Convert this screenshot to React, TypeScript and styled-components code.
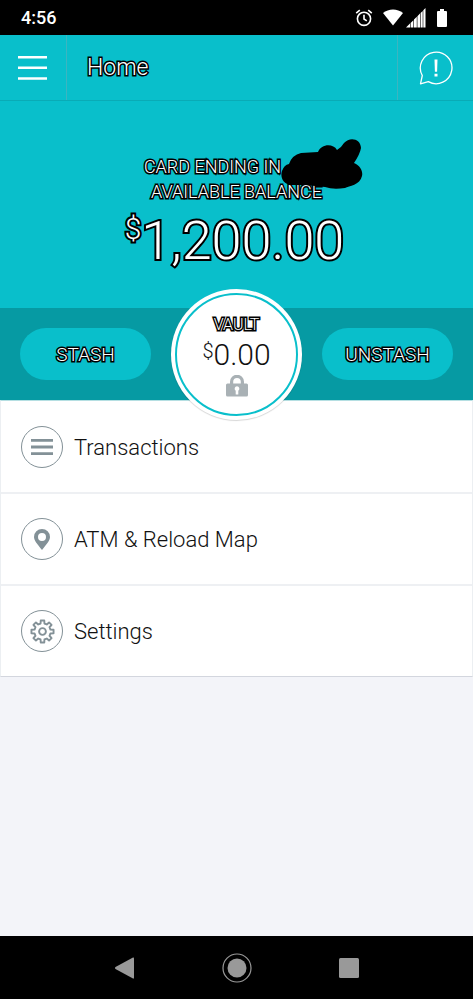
import React from "react";
import styled, { createGlobalStyle, css } from "styled-components";

const teal = "#09bfcb";
const slate = "#839197";

const GlobalStyle = createGlobalStyle`
  *, *::before, *::after { box-sizing: border-box; }
  body { margin: 0; font-family: Roboto, "Liberation Sans", sans-serif; }
  button { font: inherit; color: inherit; border: 0; padding: 0; background: none; cursor: pointer; }
  svg { display: block; }
`;

const outlined = css`
  color: #fff;
  -webkit-text-stroke: 3px #000;
  paint-order: stroke fill;
`;

const Screen = styled.div`
  min-height: 100vh;
  display: flex;
  flex-direction: column;
  background: #f3f4f9;
`;

const StatusBar = styled.div`
  height: 35px;
  display: flex;
  align-items: center;
  justify-content: space-between;
  padding: 0 26px 0 21px;
  background: #000;
  color: #fff;
`;

const Clock = styled.time`
  font-size: 18px;
  font-weight: 500;
`;

const StatusIcons = styled.div`
  display: flex;
  align-items: center;
`;

const Header = styled.header`
  height: 66px;
  display: flex;
  background: ${teal};
  border-bottom: 1px solid #09abb6;
`;

const HeaderButton = styled.button<{ $side: "left" | "right" }>`
  width: ${(p) => (p.$side === "left" ? 67 : 76)}px;
  display: flex;
  align-items: center;
  justify-content: center;
  border: 0 solid #3cb5c0;
  ${(p) => (p.$side === "left" ? "border-right-width" : "border-left-width")}: 1px;
`;

const Title = styled.h1`
  flex: 1;
  margin: 0;
  padding-left: 20px;
  align-self: center;
  font-size: 23px;
  line-height: 32px;
  font-weight: 300;
  ${outlined}
`;

const Hero = styled.section`
  height: 207px;
  padding-top: 53px;
  background: ${teal};
  text-align: center;
`;

const HeroLine = styled.p`
  margin: 0;
  font-size: 18px;
  line-height: 25px;
  font-weight: 300;
  ${outlined}
`;

const Redacted = styled.span`
  position: relative;
  display: inline-block;
  width: 48px;
  height: 16px;

  svg {
    position: absolute;
    left: 0;
    bottom: -16px;
  }
`;

const Balance = styled.p`
  margin: 8px 0 0;
  padding-right: 4px;
  display: flex;
  justify-content: center;
  align-items: flex-start;
  font-size: 54px;
  line-height: 58px;
  font-weight: 300;
  ${outlined}
  -webkit-text-stroke-width: 4px;
`;

const Currency = styled.span<{ $size: number; $line: number }>`
  font-size: ${(p) => p.$size}px;
  line-height: ${(p) => p.$line}px;
`;

const VaultBar = styled.section`
  height: 92px;
  display: flex;
  align-items: center;
  justify-content: space-between;
  padding: 0 20px;
  background: #069aa3;
`;

const PillButton = styled.button`
  width: 131px;
  height: 52px;
  border-radius: 26px;
  background: ${teal};
  font-size: 19px;
  font-weight: 300;
  ${outlined}
`;

const VaultRing = styled.button`
  position: relative;
  z-index: 1;
  flex: none;
  width: 131px;
  height: 131px;
  padding: 4px;
  border-radius: 50%;
  background: #fff;
  box-shadow: 0 1px 1px rgba(0, 0, 0, 0.16);
`;

const VaultFace = styled.span`
  height: 100%;
  display: flex;
  flex-direction: column;
  align-items: center;
  padding-top: 20px;
  border: 2px solid ${teal};
  border-radius: 50%;
`;

const VaultLabel = styled.span`
  font-size: 16px;
  line-height: 20px;
  font-weight: 300;
  ${outlined}
`;

const VaultAmount = styled.span`
  display: flex;
  align-items: flex-start;
  margin: 4px 0;
  font-size: 30px;
  line-height: 32px;
  font-weight: 300;
  color: #111;
`;

const Menu = styled.ul`
  margin: 0;
  padding: 1px 0 0;
  list-style: none;
  background: #fff;
  border: 1px solid #eceff2;
  border-top-color: #b5dfe2;
  border-bottom-color: #d3d6de;
`;

const MenuItem = styled.li`
  & + & {
    border-top: 2px solid #eef0f3;
  }
`;

const MenuLink = styled.a`
  height: 90px;
  display: flex;
  align-items: center;
  gap: 11px;
  padding-left: 20px;
  color: #111;
  font-size: 22px;
  font-weight: 300;
  text-decoration: none;
`;

const IconCircle = styled.span`
  width: 42px;
  height: 42px;
  display: flex;
  align-items: center;
  justify-content: center;
  border: 1px solid ${slate};
  border-radius: 50%;
`;

const NavBar = styled.nav`
  height: 63px;
  margin-top: auto;
  display: grid;
  grid-template-columns: 1fr 44px 1fr;
  align-items: center;
  background: #000;
`;

const NavButton = styled.button<{ $justify?: string }>`
  height: 44px;
  display: flex;
  align-items: center;
  justify-content: ${(p) => p.$justify ?? "center"};
  padding: 0 80px;

  &:nth-child(2) { padding: 0; }
`;

const AlarmIcon = () => (
  <svg width="18" height="18" viewBox="0 0 18 18" fill="none" stroke="#fff" strokeWidth="1.6">
    <circle cx="9" cy="9.8" r="6.6" />
    <path d="M9 5.8V10l2.8 1.8M1.2 4.2 4.8 1.2M16.8 4.2l-3.6-3" />
  </svg>
);

const WifiIcon = () => (
  <svg width="20" height="17" viewBox="0 0 20 17" fill="#fff">
    <path d="M0 4C5.500-.8 14.500-.8 20 4L10 16.500Z" />
  </svg>
);

const SignalIcon = () => (
  <svg width="20" height="20" viewBox="0 0 20 20" fill="#fff">
    <path d="M0 19.500 4 15.500V19.500ZM4.600 15 7.400 12.200V19.500H4.600ZM8 11.600 10.800 8.800V19.500H8ZM11.400 8.200 14 5.600V19.500H11.400ZM14.600 5 16.700 2.900V19.500H14.600ZM17.300 2.200 19.500 0V19.500H17.300Z" />
  </svg>
);

const BatteryIcon = () => (
  <svg width="10" height="18" viewBox="0 0 10 18" fill="#fff">
    <path d="M3 0h4v2h2q1 0 1 1v14q0 1-1 1H1q-1 0-1-1V3q0-1 1-1h2Z" />
  </svg>
);

const HamburgerIcon = () => (
  <svg width="30" height="24" viewBox="0 0 30 24" fill="#fff">
    <path d="M0 0h29v2.600H0ZM0 10.500h29v2.600H0ZM0 21.200h29v2.600H0Z" />
  </svg>
);

const AlertBubbleIcon = () => (
  <svg width="34" height="34" viewBox="0 0 34 34" fill="none" stroke="#fff">
    <path d="M3.300 24.500A15.800 15.800 0 1 1 9.300 30.600L1.500 32.800Z" strokeWidth="1.300" strokeLinejoin="round" />
    <path d="M15.500 8.500h3l-.4 12.200h-2.200ZM15.500 22.800h3v2.800h-3Z" fill="#fff" stroke="none" />
  </svg>
);

const Scribble = () => (
  <svg width="82" height="50" viewBox="0 0 82 50">
    <path d="M8 25Q11 16 20 14L37 13C40 5 52 4 56 11Q60 9 63 4C69-3 80 0 80 9Q79 15 73 24C80 27 82 33 81 37C79 46 68 47 64 49Q52 51 44 48L24 46H10C2 45-1 38 1 32Q3 26 8 25Z" />
  </svg>
);

const LockIcon = () => (
  <svg width="22" height="22" viewBox="0 0 22 22">
    <path d="M5.600 10V6.700a5.400 5.400 0 0 1 10.800 0V10" fill="none" stroke="#a9b1b5" strokeWidth="3.200" />
    <rect y="8.500" width="22" height="13" rx="1.500" fill="#a9b1b5" />
    <path d="M11 11.300a2.400 2.400 0 0 1 1.300 4.400V19.500H9.700V15.700A2.400 2.400 0 0 1 11 11.300Z" fill="#fff" />
  </svg>
);

const ListIcon = () => (
  <svg width="22" height="16" viewBox="0 0 22 16" fill={slate}>
    <path d="M0 0h22v2.800H0ZM0 6.600h22v2.800H0ZM0 13.200h22V16H0Z" />
  </svg>
);

const PinIcon = () => (
  <svg width="16" height="21" viewBox="0 0 16 21">
    <path d="M8 0a8 8 0 0 1 8 8c0 3.500-3.500 7.300-8 13C3.500 15.300 0 11.500 0 8a8 8 0 0 1 8-8Zm0 4a4 4 0 1 0 0 8 4 4 0 0 0 0-8Z" fill={slate} />
  </svg>
);

const gearPath = (() => {
  const points: string[] = [];
  for (let i = 0; i < 8; i++) {
    const base = (i * Math.PI) / 4;
    const corners: [number, number][] = [[-0.24, 8.2], [-0.16, 11.2], [0.16, 11.2], [0.24, 8.2]];
    corners.forEach(([offset, radius]) => {
      const a = base + offset;
      points.push(`${(12.5 + radius * Math.sin(a)).toFixed(2)} ${(12.5 - radius * Math.cos(a)).toFixed(2)}`);
    });
  }
  return `M${points.join("L")}Z`;
})();

const GearIcon = () => (
  <svg width="25" height="25" viewBox="0 0 25 25" fill="none" stroke={slate} strokeWidth="1.900" strokeLinejoin="round">
    <path d={gearPath} />
    <circle cx="12.500" cy="12.500" r="3.400" />
  </svg>
);

const menuItems = [
  { label: "Transactions", href: "#transactions", Icon: ListIcon },
  { label: "ATM & Reload Map", href: "#map", Icon: PinIcon },
  { label: "Settings", href: "#settings", Icon: GearIcon },
];

const AlarmSlot = styled.span`margin-right: 10px;`;
const WifiSlot = styled.span`margin-right: 3px;`;
const BatterySlot = styled.span`margin-left: 11px;`;

export default function App() {
  return (
    <Screen>
      <GlobalStyle />
      <StatusBar>
        <Clock>4:56</Clock>
        <StatusIcons>
          <AlarmSlot><AlarmIcon /></AlarmSlot>
          <WifiSlot><WifiIcon /></WifiSlot>
          <SignalIcon />
          <BatterySlot><BatteryIcon /></BatterySlot>
        </StatusIcons>
      </StatusBar>
      <Header>
        <HeaderButton $side="left" aria-label="Menu"><HamburgerIcon /></HeaderButton>
        <Title>Home</Title>
        <HeaderButton $side="right" aria-label="Alerts"><AlertBubbleIcon /></HeaderButton>
      </Header>
      <main>
        <Hero>
          <HeroLine>CARD ENDING IN<Redacted><Scribble /></Redacted></HeroLine>
          <HeroLine>AVAILABLE BALANCE</HeroLine>
          <Balance><Currency $size={30} $line={34}>$</Currency>1,200.00</Balance>
        </Hero>
        <VaultBar>
          <PillButton>STASH</PillButton>
          <VaultRing>
            <VaultFace>
              <VaultLabel>VAULT</VaultLabel>
              <VaultAmount><Currency $size={20} $line={24}>$</Currency>0.00</VaultAmount>
              <LockIcon />
            </VaultFace>
          </VaultRing>
          <PillButton>UNSTASH</PillButton>
        </VaultBar>
        <Menu>
          {menuItems.map(({ label, href, Icon }) => (
            <MenuItem key={label}>
              <MenuLink href={href}>
                <IconCircle><Icon /></IconCircle>
                {label}
              </MenuLink>
            </MenuItem>
          ))}
        </Menu>
      </main>
      <NavBar>
        <NavButton $justify="flex-end" aria-label="Back">
          <svg width="20" height="22" viewBox="0 0 20 22" fill="#999"><path d="M18 .5Q19 0 19 1.500V20.500Q19 22 18 21.500L.5 12Q-.5 11 .5 10Z" /></svg>
        </NavButton>
        <NavButton aria-label="Home">
          <svg width="30" height="30" viewBox="0 0 30 30"><circle cx="15" cy="15" r="14" fill="none" stroke="#999" strokeWidth="1.200" /><circle cx="15" cy="15" r="9.500" fill="#999" /></svg>
        </NavButton>
        <NavButton $justify="flex-start" aria-label="Recent apps">
          <svg width="20" height="20" viewBox="0 0 20 20"><rect width="20" height="20" rx="1.500" fill="#999" /></svg>
        </NavButton>
      </NavBar>
    </Screen>
  );
}
